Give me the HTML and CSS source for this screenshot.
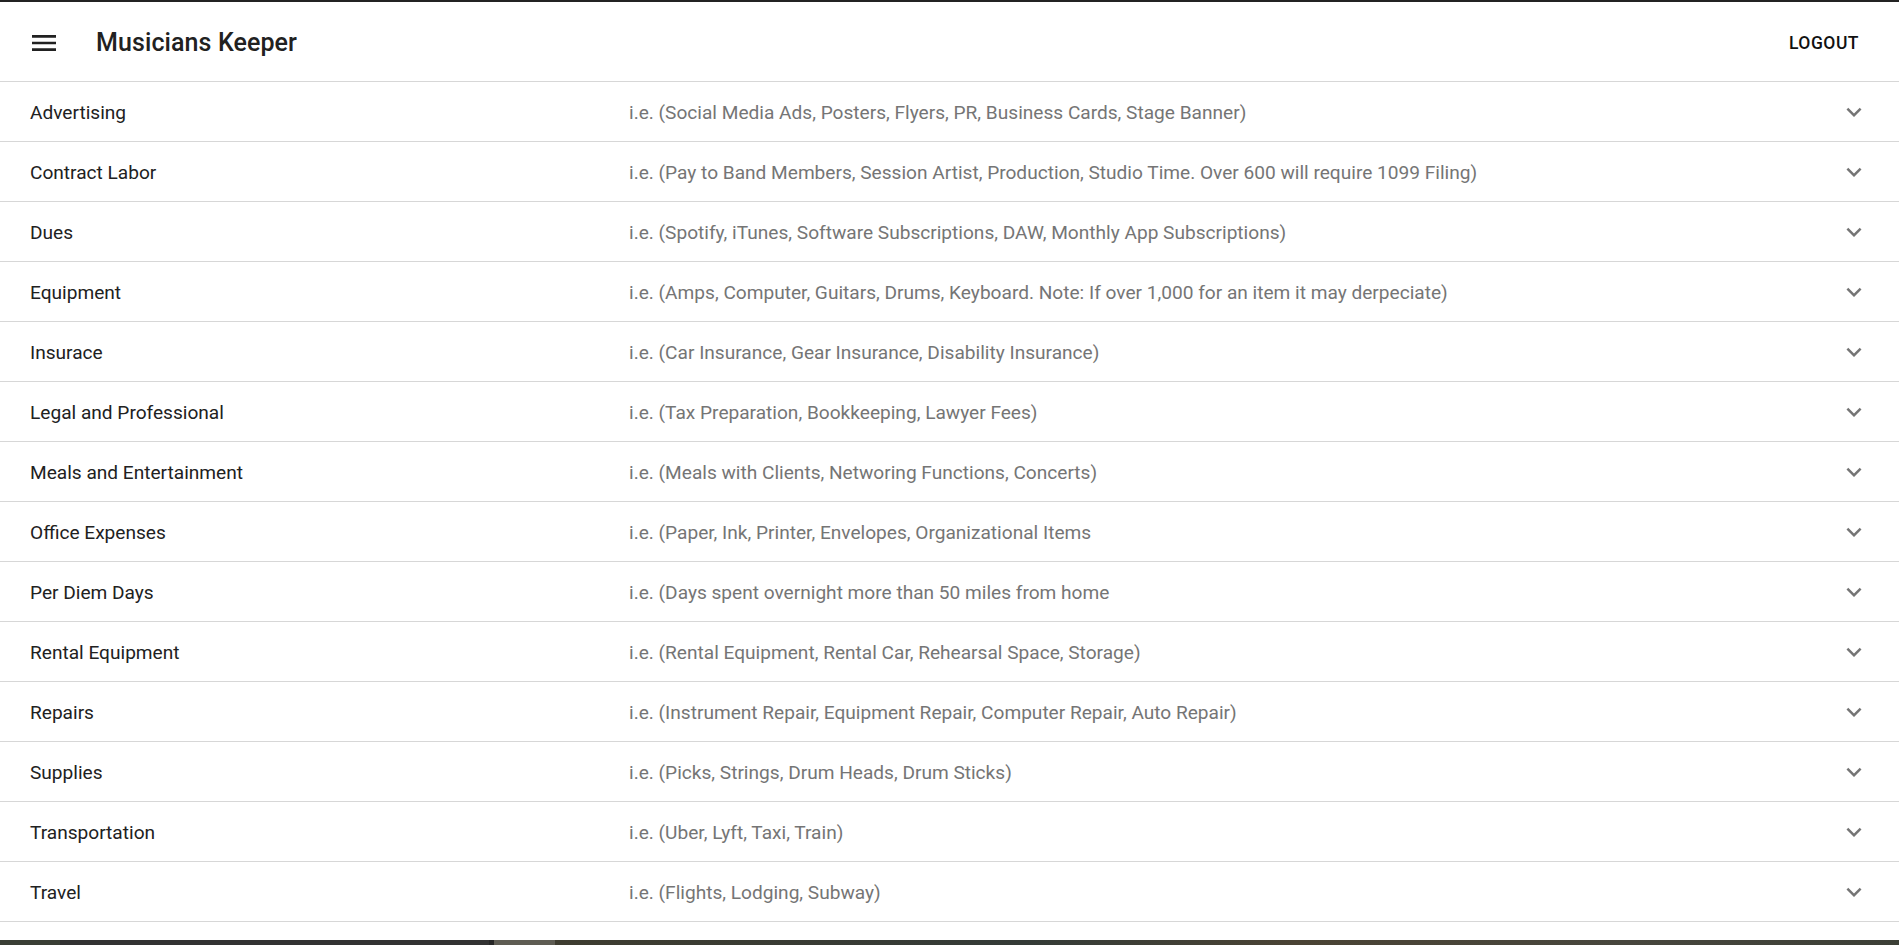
FILE: index.html
```html
<!DOCTYPE html>
<html lang="en">
<head>
<meta charset="utf-8">
<title>Musicians Keeper</title>
<link rel="stylesheet" href="styles.css">
</head>
<body>
<div class="window">
  <header class="appbar">
    <button class="menu-btn" aria-label="menu">
      <svg viewBox="0 0 24 24" width="32" height="32"><path d="M3 18h18v-2H3v2zm0-5h18v-2H3v2zm0-7v2h18V6H3z"/></svg>
    </button>
    <h1 class="title">Musicians Keeper</h1>
    <div class="spacer"></div>
    <button class="logout">Logout</button>
  </header>
  <main class="list">
    <div class="row"><div class="heading">Advertising</div><div class="secondary">i.e. (Social Media Ads, Posters, Flyers, PR, Business Cards, Stage Banner)</div><span class="expand"><svg viewBox="0 0 24 24" width="30" height="30"><path d="M16.59 8.59L12 13.17 7.41 8.59 6 10l6 6 6-6z"/></svg></span></div>
    <div class="row"><div class="heading">Contract Labor</div><div class="secondary">i.e. (Pay to Band Members, Session Artist, Production, Studio Time. Over 600 will require 1099 Filing)</div><span class="expand"><svg viewBox="0 0 24 24" width="30" height="30"><path d="M16.59 8.59L12 13.17 7.41 8.59 6 10l6 6 6-6z"/></svg></span></div>
    <div class="row"><div class="heading">Dues</div><div class="secondary">i.e. (Spotify, iTunes, Software Subscriptions, DAW, Monthly App Subscriptions)</div><span class="expand"><svg viewBox="0 0 24 24" width="30" height="30"><path d="M16.59 8.59L12 13.17 7.41 8.59 6 10l6 6 6-6z"/></svg></span></div>
    <div class="row"><div class="heading">Equipment</div><div class="secondary">i.e. (Amps, Computer, Guitars, Drums, Keyboard. Note: If over 1,000 for an item it may derpeciate)</div><span class="expand"><svg viewBox="0 0 24 24" width="30" height="30"><path d="M16.59 8.59L12 13.17 7.41 8.59 6 10l6 6 6-6z"/></svg></span></div>
    <div class="row"><div class="heading">Insurace</div><div class="secondary">i.e. (Car Insurance, Gear Insurance, Disability Insurance)</div><span class="expand"><svg viewBox="0 0 24 24" width="30" height="30"><path d="M16.59 8.59L12 13.17 7.41 8.59 6 10l6 6 6-6z"/></svg></span></div>
    <div class="row"><div class="heading">Legal and Professional</div><div class="secondary">i.e. (Tax Preparation, Bookkeeping, Lawyer Fees)</div><span class="expand"><svg viewBox="0 0 24 24" width="30" height="30"><path d="M16.59 8.59L12 13.17 7.41 8.59 6 10l6 6 6-6z"/></svg></span></div>
    <div class="row"><div class="heading">Meals and Entertainment</div><div class="secondary">i.e. (Meals with Clients, Networing Functions, Concerts)</div><span class="expand"><svg viewBox="0 0 24 24" width="30" height="30"><path d="M16.59 8.59L12 13.17 7.41 8.59 6 10l6 6 6-6z"/></svg></span></div>
    <div class="row"><div class="heading">Office Expenses</div><div class="secondary">i.e. (Paper, Ink, Printer, Envelopes, Organizational Items</div><span class="expand"><svg viewBox="0 0 24 24" width="30" height="30"><path d="M16.59 8.59L12 13.17 7.41 8.59 6 10l6 6 6-6z"/></svg></span></div>
    <div class="row"><div class="heading">Per Diem Days</div><div class="secondary">i.e. (Days spent overnight more than 50 miles from home</div><span class="expand"><svg viewBox="0 0 24 24" width="30" height="30"><path d="M16.59 8.59L12 13.17 7.41 8.59 6 10l6 6 6-6z"/></svg></span></div>
    <div class="row"><div class="heading">Rental Equipment</div><div class="secondary">i.e. (Rental Equipment, Rental Car, Rehearsal Space, Storage)</div><span class="expand"><svg viewBox="0 0 24 24" width="30" height="30"><path d="M16.59 8.59L12 13.17 7.41 8.59 6 10l6 6 6-6z"/></svg></span></div>
    <div class="row"><div class="heading">Repairs</div><div class="secondary">i.e. (Instrument Repair, Equipment Repair, Computer Repair, Auto Repair)</div><span class="expand"><svg viewBox="0 0 24 24" width="30" height="30"><path d="M16.59 8.59L12 13.17 7.41 8.59 6 10l6 6 6-6z"/></svg></span></div>
    <div class="row"><div class="heading">Supplies</div><div class="secondary">i.e. (Picks, Strings, Drum Heads, Drum Sticks)</div><span class="expand"><svg viewBox="0 0 24 24" width="30" height="30"><path d="M16.59 8.59L12 13.17 7.41 8.59 6 10l6 6 6-6z"/></svg></span></div>
    <div class="row"><div class="heading">Transportation</div><div class="secondary">i.e. (Uber, Lyft, Taxi, Train)</div><span class="expand"><svg viewBox="0 0 24 24" width="30" height="30"><path d="M16.59 8.59L12 13.17 7.41 8.59 6 10l6 6 6-6z"/></svg></span></div>
    <div class="row"><div class="heading">Travel</div><div class="secondary">i.e. (Flights, Lodging, Subway)</div><span class="expand"><svg viewBox="0 0 24 24" width="30" height="30"><path d="M16.59 8.59L12 13.17 7.41 8.59 6 10l6 6 6-6z"/></svg></span></div>
  </main>
  <div class="fill"></div>
</div>
<div class="desktop">
  <span class="seg s1"></span>
  <span class="seg s2"></span>
  <span class="seg s3"></span>
  <span class="seg s4"></span>
  <span class="seg s5"></span>
</div>
</body>
</html>
```

FILE: styles.css
```css
* { box-sizing: border-box; }
html, body {
  margin: 0;
  padding: 0;
  height: 945px;
  overflow: hidden;
  background: #ffffff;
  font-family: Roboto, "Liberation Sans", Arial, sans-serif;
}
.window {
  height: 940px;
  display: flex;
  flex-direction: column;
  border-top: 2px solid #232323;
  background: #fff;
}
.appbar {
  height: 80px;
  flex: none;
  display: flex;
  align-items: center;
  padding: 2px 30px 0 28px;
  border-bottom: 1px solid #d7d7d7;
}
.menu-btn {
  border: 0;
  background: none;
  padding: 0;
  width: 32px;
  height: 32px;
  display: flex;
  align-items: center;
  justify-content: center;
  fill: #212121;
}
.menu-btn svg { display: block; }
.title {
  margin: 0 0 0 36px;
  font-size: 25px;
  font-weight: 500;
  color: #212121;
  letter-spacing: 0.1px;
}
.spacer { flex: 1; }
.logout {
  border: 0;
  background: none;
  padding: 0 10px 0 0;
  font-family: inherit;
  font-size: 17.5px;
  font-weight: 500;
  text-transform: uppercase;
  letter-spacing: 0.5px;
  color: #111;
}
.list { flex: none; }
.row {
  height: 60px;
  display: flex;
  align-items: center;
  padding: 2px 30px 0;
  border-bottom: 1px solid #d7d7d7;
  font-size: 19.1px;
}
.heading {
  flex: 0 0 599px;
  color: #212121;
}
.secondary {
  flex: 1;
  color: #757575;
  white-space: nowrap;
  overflow: hidden;
}
.expand {
  width: 30px;
  height: 30px;
  margin-top: -2px;
  fill: #757575;
  flex: none;
}
.expand svg { display: block; }
.fill { flex: 1; }
.desktop {
  height: 5px;
  display: flex;
}
.seg { display: block; height: 5px; }
.s1 { width: 60px; background: #3a3e35; }
.s2 { width: 429px; background: #323232; }
.s3 { width: 5px; background: #262626; }
.s4 { width: 61px; background: #5e5c53; }
.s5 { flex: 1; background: linear-gradient(90deg, #3e3c30 0%, #343b37 35%, #4a4334 55%, #47463d 80%, #3c3f36 100%); }
```
